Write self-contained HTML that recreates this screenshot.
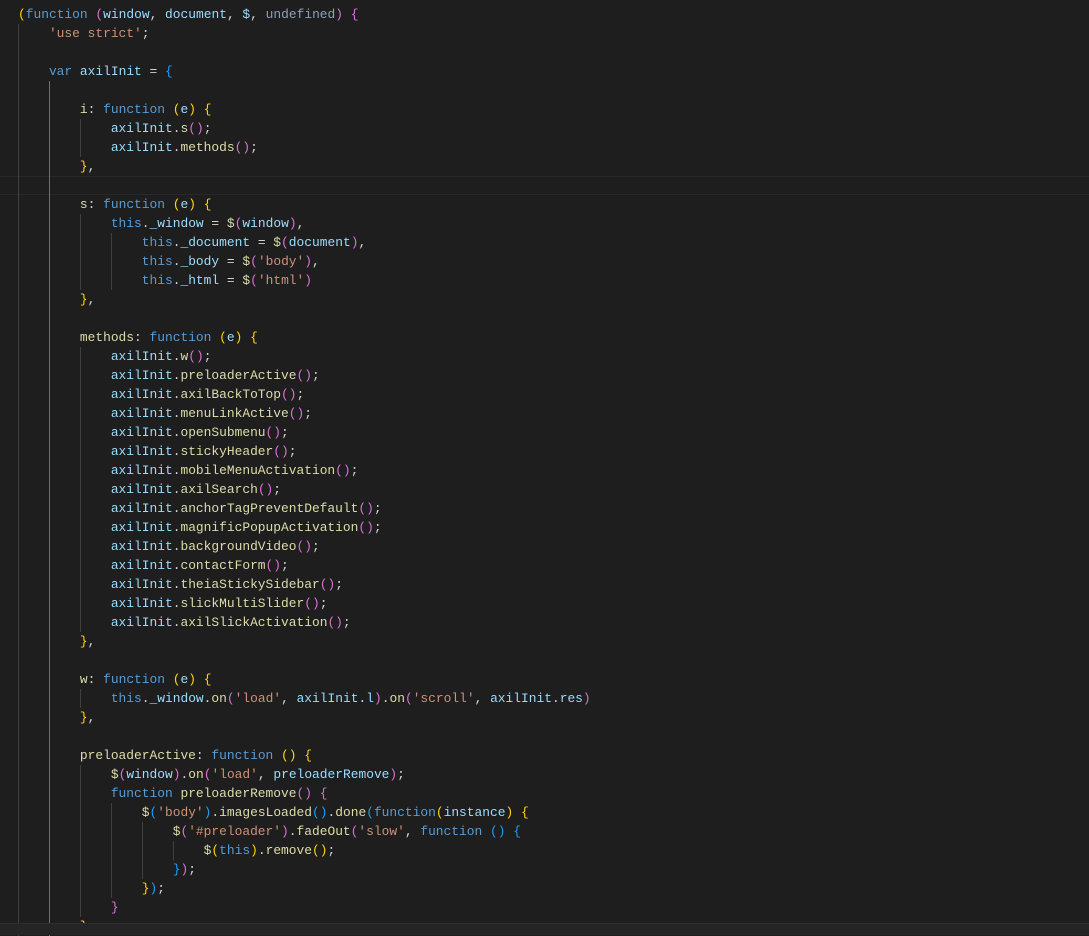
<!DOCTYPE html>
<html><head><meta charset="utf-8"><style>
html,body{margin:0;padding:0;background:#1e1e1e;width:1089px;height:935px;overflow:hidden}
#code{position:absolute;left:18px;top:5px;font-family:"Liberation Mono",monospace;font-size:12.9px;line-height:19px;color:#d4d4d4;white-space:pre}
.l{height:19px}
.g{display:inline-block;width:4ch;height:19px;vertical-align:top;box-shadow:inset 1px 0 0 #404040}
.ga{box-shadow:inset 1px 0 0 #707070}
.k{color:#569cd6}.v{color:#9cdcfe}.f{color:#dcdcaa}.s{color:#ce9178}.u{color:#8aa0b8}
.b0{color:#ffd700}.b1{color:#da70d6}.b2{color:#179fff}
#hl{position:absolute;left:0;right:0;top:176px;height:17px;border-top:1px solid #282828;border-bottom:1px solid #282828}
#bar{position:absolute;left:0;right:0;top:923px;bottom:0;background:#252526;border-top:1px solid #2d2d2d}
</style></head><body>
<div id="hl"></div>
<div id="code"><div class="l"><span class="b0">(</span><span class="k">function</span> <span class="b1">(</span><span class="v">window</span>, <span class="v">document</span>, <span class="v">$</span>, <span class="u">undefined</span><span class="b1">)</span> <span class="b1">{</span></div><div class="l"><span class="g"></span><span class="s">'use strict'</span>;</div><div class="l"><span class="g"></span></div><div class="l"><span class="g"></span><span class="k">var</span> <span class="v">axilInit</span> = <span class="b2">{</span></div><div class="l"><span class="g"></span><span class="g ga"></span></div><div class="l"><span class="g"></span><span class="g ga"></span><span class="f">i</span>: <span class="k">function</span> <span class="b0">(</span><span class="v">e</span><span class="b0">)</span> <span class="b0">{</span></div><div class="l"><span class="g"></span><span class="g ga"></span><span class="g"></span><span class="v">axilInit</span>.<span class="f">s</span><span class="b1">()</span>;</div><div class="l"><span class="g"></span><span class="g ga"></span><span class="g"></span><span class="v">axilInit</span>.<span class="f">methods</span><span class="b1">()</span>;</div><div class="l"><span class="g"></span><span class="g ga"></span><span class="b0">}</span>,</div><div class="l"><span class="g"></span><span class="g ga"></span></div><div class="l"><span class="g"></span><span class="g ga"></span><span class="f">s</span>: <span class="k">function</span> <span class="b0">(</span><span class="v">e</span><span class="b0">)</span> <span class="b0">{</span></div><div class="l"><span class="g"></span><span class="g ga"></span><span class="g"></span><span class="k">this</span>.<span class="v">_window</span> = <span class="f">$</span><span class="b1">(</span><span class="v">window</span><span class="b1">)</span>,</div><div class="l"><span class="g"></span><span class="g ga"></span><span class="g"></span><span class="g"></span><span class="k">this</span>.<span class="v">_document</span> = <span class="f">$</span><span class="b1">(</span><span class="v">document</span><span class="b1">)</span>,</div><div class="l"><span class="g"></span><span class="g ga"></span><span class="g"></span><span class="g"></span><span class="k">this</span>.<span class="v">_body</span> = <span class="f">$</span><span class="b1">(</span><span class="s">'body'</span><span class="b1">)</span>,</div><div class="l"><span class="g"></span><span class="g ga"></span><span class="g"></span><span class="g"></span><span class="k">this</span>.<span class="v">_html</span> = <span class="f">$</span><span class="b1">(</span><span class="s">'html'</span><span class="b1">)</span></div><div class="l"><span class="g"></span><span class="g ga"></span><span class="b0">}</span>,</div><div class="l"><span class="g"></span><span class="g ga"></span></div><div class="l"><span class="g"></span><span class="g ga"></span><span class="f">methods</span>: <span class="k">function</span> <span class="b0">(</span><span class="v">e</span><span class="b0">)</span> <span class="b0">{</span></div><div class="l"><span class="g"></span><span class="g ga"></span><span class="g"></span><span class="v">axilInit</span>.<span class="f">w</span><span class="b1">()</span>;</div><div class="l"><span class="g"></span><span class="g ga"></span><span class="g"></span><span class="v">axilInit</span>.<span class="f">preloaderActive</span><span class="b1">()</span>;</div><div class="l"><span class="g"></span><span class="g ga"></span><span class="g"></span><span class="v">axilInit</span>.<span class="f">axilBackToTop</span><span class="b1">()</span>;</div><div class="l"><span class="g"></span><span class="g ga"></span><span class="g"></span><span class="v">axilInit</span>.<span class="f">menuLinkActive</span><span class="b1">()</span>;</div><div class="l"><span class="g"></span><span class="g ga"></span><span class="g"></span><span class="v">axilInit</span>.<span class="f">openSubmenu</span><span class="b1">()</span>;</div><div class="l"><span class="g"></span><span class="g ga"></span><span class="g"></span><span class="v">axilInit</span>.<span class="f">stickyHeader</span><span class="b1">()</span>;</div><div class="l"><span class="g"></span><span class="g ga"></span><span class="g"></span><span class="v">axilInit</span>.<span class="f">mobileMenuActivation</span><span class="b1">()</span>;</div><div class="l"><span class="g"></span><span class="g ga"></span><span class="g"></span><span class="v">axilInit</span>.<span class="f">axilSearch</span><span class="b1">()</span>;</div><div class="l"><span class="g"></span><span class="g ga"></span><span class="g"></span><span class="v">axilInit</span>.<span class="f">anchorTagPreventDefault</span><span class="b1">()</span>;</div><div class="l"><span class="g"></span><span class="g ga"></span><span class="g"></span><span class="v">axilInit</span>.<span class="f">magnificPopupActivation</span><span class="b1">()</span>;</div><div class="l"><span class="g"></span><span class="g ga"></span><span class="g"></span><span class="v">axilInit</span>.<span class="f">backgroundVideo</span><span class="b1">()</span>;</div><div class="l"><span class="g"></span><span class="g ga"></span><span class="g"></span><span class="v">axilInit</span>.<span class="f">contactForm</span><span class="b1">()</span>;</div><div class="l"><span class="g"></span><span class="g ga"></span><span class="g"></span><span class="v">axilInit</span>.<span class="f">theiaStickySidebar</span><span class="b1">()</span>;</div><div class="l"><span class="g"></span><span class="g ga"></span><span class="g"></span><span class="v">axilInit</span>.<span class="f">slickMultiSlider</span><span class="b1">()</span>;</div><div class="l"><span class="g"></span><span class="g ga"></span><span class="g"></span><span class="v">axilInit</span>.<span class="f">axilSlickActivation</span><span class="b1">()</span>;</div><div class="l"><span class="g"></span><span class="g ga"></span><span class="b0">}</span>,</div><div class="l"><span class="g"></span><span class="g ga"></span></div><div class="l"><span class="g"></span><span class="g ga"></span><span class="f">w</span>: <span class="k">function</span> <span class="b0">(</span><span class="v">e</span><span class="b0">)</span> <span class="b0">{</span></div><div class="l"><span class="g"></span><span class="g ga"></span><span class="g"></span><span class="k">this</span>.<span class="v">_window</span>.<span class="f">on</span><span class="b1">(</span><span class="s">'load'</span>, <span class="v">axilInit</span>.<span class="v">l</span><span class="b1">)</span>.<span class="f">on</span><span class="b1">(</span><span class="s">'scroll'</span>, <span class="v">axilInit</span>.<span class="v">res</span><span class="b1">)</span></div><div class="l"><span class="g"></span><span class="g ga"></span><span class="b0">}</span>,</div><div class="l"><span class="g"></span><span class="g ga"></span></div><div class="l"><span class="g"></span><span class="g ga"></span><span class="f">preloaderActive</span>: <span class="k">function</span> <span class="b0">()</span> <span class="b0">{</span></div><div class="l"><span class="g"></span><span class="g ga"></span><span class="g"></span><span class="f">$</span><span class="b1">(</span><span class="v">window</span><span class="b1">)</span>.<span class="f">on</span><span class="b1">(</span><span class="s">'load'</span>, <span class="v">preloaderRemove</span><span class="b1">)</span>;</div><div class="l"><span class="g"></span><span class="g ga"></span><span class="g"></span><span class="k">function</span> <span class="f">preloaderRemove</span><span class="b1">()</span> <span class="b1">{</span></div><div class="l"><span class="g"></span><span class="g ga"></span><span class="g"></span><span class="g"></span><span class="f">$</span><span class="b2">(</span><span class="s">'body'</span><span class="b2">)</span>.<span class="f">imagesLoaded</span><span class="b2">()</span>.<span class="f">done</span><span class="b2">(</span><span class="k">function</span><span class="b0">(</span><span class="v">instance</span><span class="b0">)</span> <span class="b0">{</span></div><div class="l"><span class="g"></span><span class="g ga"></span><span class="g"></span><span class="g"></span><span class="g"></span><span class="f">$</span><span class="b1">(</span><span class="s">'#preloader'</span><span class="b1">)</span>.<span class="f">fadeOut</span><span class="b1">(</span><span class="s">'slow'</span>, <span class="k">function</span> <span class="b2">()</span> <span class="b2">{</span></div><div class="l"><span class="g"></span><span class="g ga"></span><span class="g"></span><span class="g"></span><span class="g"></span><span class="g"></span><span class="f">$</span><span class="b0">(</span><span class="k">this</span><span class="b0">)</span>.<span class="f">remove</span><span class="b0">()</span>;</div><div class="l"><span class="g"></span><span class="g ga"></span><span class="g"></span><span class="g"></span><span class="g"></span><span class="b2">}</span><span class="b1">)</span>;</div><div class="l"><span class="g"></span><span class="g ga"></span><span class="g"></span><span class="g"></span><span class="b0">}</span><span class="b2">)</span>;</div><div class="l"><span class="g"></span><span class="g ga"></span><span class="g"></span><span class="b1">}</span></div><div class="l"><span class="g"></span><span class="g ga"></span><span class="b0">}</span>,</div></div>
<div id="bar"></div>
</body></html>
